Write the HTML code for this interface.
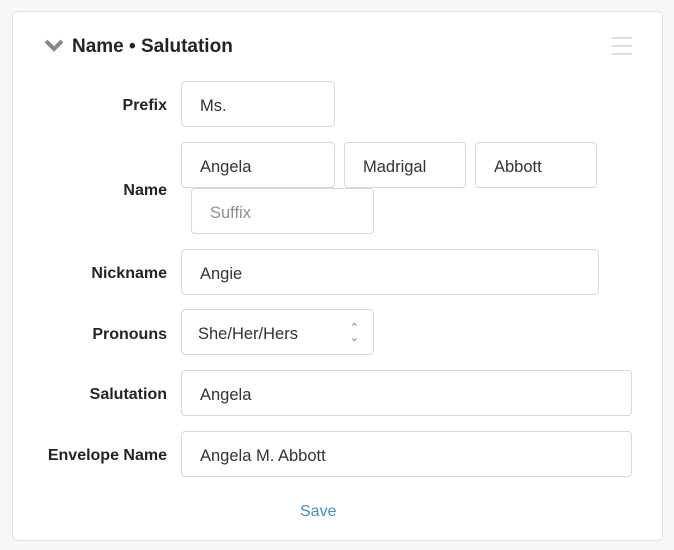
<!DOCTYPE html><html><head><style>
body{margin:0;width:674px;height:550px;background:#f6f7f8;font-family:"Liberation Sans",sans-serif;position:relative;overflow:hidden}
.card{position:absolute;left:12px;top:11px;width:649px;height:528px;background:#fff;border:1px solid #dfe1e4;border-radius:5px}
.t{position:absolute;left:72px;top:36px;font-size:19px;font-weight:bold;color:#212529}
.lab{position:absolute;right:507px;font-size:16px;font-weight:bold;color:#212529;text-align:right}
.in{position:absolute;box-sizing:border-box;border:1px solid #d5d8dc;border-radius:4px;height:46px;padding-left:18px;line-height:48px;font-size:16.5px;color:#333;background:#fff}
.ph{color:#8a9096}
</style></head><body>
<div class="card"></div>
<svg style="position:absolute;left:44px;top:39px" width="20" height="13"><path d="M2 2 L10 10 L18 2" stroke="#888" stroke-width="4" fill="none"/></svg>
<div class="t">Name • Salutation</div>
<div style="position:absolute;left:612px;top:37px;width:20px;height:2px;background:#ddd;box-shadow:0 8px 0 #ddd,0 16px 0 #ddd"></div>
<div class="lab" style="top:97px">Prefix</div>
<div class="in" style="left:181px;top:81px;width:154px">Ms.</div>
<div class="lab" style="top:182px">Name</div>
<div class="in" style="left:181px;top:142px;width:154px">Angela</div>
<div class="in" style="left:344px;top:142px;width:122px">Madrigal</div>
<div class="in" style="left:475px;top:142px;width:122px">Abbott</div>
<div class="in ph" style="left:191px;top:188px;width:183px">Suffix</div>
<div class="lab" style="top:265px">Nickname</div>
<div class="in" style="left:181px;top:249px;width:418px">Angie</div>
<div class="lab" style="top:326px">Pronouns</div>
<div class="in" style="left:181px;top:309px;width:193px;padding-left:16px">She/Her/Hers<span style="position:absolute;right:14px;top:0;font-size:11px;color:#777;line-height:10px;padding-top:13px">&#8963;<br>&#8964;</span></div>
<div class="lab" style="top:386px">Salutation</div>
<div class="in" style="left:181px;top:370px;width:451px">Angela</div>
<div class="lab" style="top:447px">Envelope Name</div>
<div class="in" style="left:181px;top:431px;width:451px">Angela M. Abbott</div>
<div style="position:absolute;left:300px;top:503px;font-size:16px;color:#3a8fd6">Save</div>
</body></html>
